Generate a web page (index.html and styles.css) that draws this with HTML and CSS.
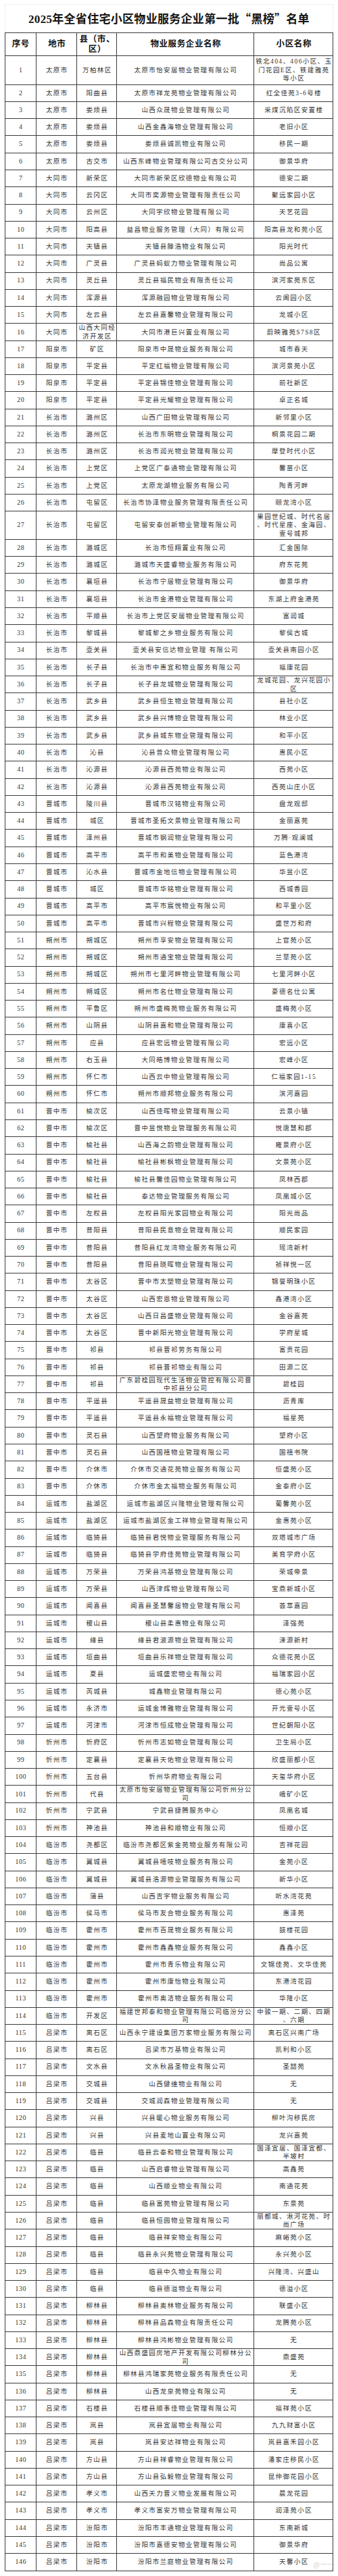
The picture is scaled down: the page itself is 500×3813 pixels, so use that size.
FILE: index.html
```html
<!DOCTYPE html>
<html lang="zh-CN">
<head>
<meta charset="utf-8">
<title>2025年全省住宅小区物业服务企业第一批“黑榜”名单</title>
<link rel="stylesheet" href="styles.css">
</head>
<body>
<div class="page">
  <div class="title-box">
    <h1 class="title">2025年全省住宅小区物业服务企业第一批<span class="q">“</span>黑榜<span class="q">”</span>名单</h1>
  </div>
  <div class="sheet">
    <div class="row head"><span>序号</span><span>地市</span><span><span>县（市、<br>区）</span></span><span>物业服务企业名称</span><span>小区名称</span></div>
    <div class="row tall"><span>1</span><span>太原市</span><span>万柏林区</span><span>太原市怡安居物业管理有限公司</span><span><span>铁北404、406小区、玉<br>门花园E区、铁建雅苑<br>等小区</span></span></div>
    <div class="row"><span>2</span><span>太原市</span><span>阳曲县</span><span>太原市祥龙苑物业管理有限公司</span><span>红全佳苑3-6号楼</span></div>
    <div class="row"><span>3</span><span>太原市</span><span>娄烦县</span><span>山西众晟物业管理有限公司</span><span>采煤沉陷区安置楼</span></div>
    <div class="row"><span>4</span><span>太原市</span><span>娄烦县</span><span>山西金鑫海物业管理有限公司</span><span>老旧小区</span></div>
    <div class="row"><span>5</span><span>太原市</span><span>娄烦县</span><span>娄烦县诚凯物业有限公司</span><span>移民一期</span></div>
    <div class="row"><span>6</span><span>太原市</span><span>古交市</span><span>山西东峰物业管理有限公司古交分公司</span><span>御景华府</span></div>
    <div class="row"><span>7</span><span>大同市</span><span>新荣区</span><span>大同市新荣区欣德物业有限公司</span><span>德安二期</span></div>
    <div class="row"><span>8</span><span>大同市</span><span>云冈区</span><span>大同市奕源物业管理有限责任公司</span><span>聚远家园小区</span></div>
    <div class="row"><span>9</span><span>大同市</span><span>云州区</span><span>大同宇欣物业管理有限公司</span><span>天艺花园</span></div>
    <div class="row"><span>10</span><span>大同市</span><span>阳高县</span><span>益昌物业服务管理（大同）有限公司</span><span>阳高县龙和苑小区</span></div>
    <div class="row"><span>11</span><span>大同市</span><span>天镇县</span><span>天镇县滕浩物业有限公司</span><span>阳光时代</span></div>
    <div class="row"><span>12</span><span>大同市</span><span>广灵县</span><span>广灵县蚂蚁力物业管理有限公司</span><span>尚品公寓</span></div>
    <div class="row"><span>13</span><span>大同市</span><span>灵丘县</span><span>灵丘县福民物业有限责任公司</span><span>滨河家苑东区</span></div>
    <div class="row"><span>14</span><span>大同市</span><span>浑源县</span><span>浑源融园物业管理有限公司</span><span>云阖园小区</span></div>
    <div class="row"><span>15</span><span>大同市</span><span>左云县</span><span>左云县嘉馨物业管理有限公司</span><span>龙城小区</span></div>
    <div class="row"><span>16</span><span>大同市</span><span><span>山西大同经<br>济开发区</span></span><span>大同市港巨兴置业有限公司</span><span>蔚映雅苑S7S8区</span></div>
    <div class="row"><span>17</span><span>阳泉市</span><span>矿区</span><span>阳泉市中晟物业服务有限公司</span><span>城市春天</span></div>
    <div class="row"><span>18</span><span>阳泉市</span><span>平定县</span><span>平定红福物业管理有限公司</span><span>滨河景苑小区</span></div>
    <div class="row"><span>19</span><span>阳泉市</span><span>平定县</span><span>平定县锦佳物业管理有限公司</span><span>前社新区</span></div>
    <div class="row"><span>20</span><span>阳泉市</span><span>平定县</span><span>平定县光耀物业管理有限公司</span><span>卓正名城</span></div>
    <div class="row"><span>21</span><span>长治市</span><span>潞州区</span><span>山西广田物业管理有限公司</span><span>新邻里小区</span></div>
    <div class="row"><span>22</span><span>长治市</span><span>潞州区</span><span>长治市东明物业管理有限公司</span><span>桐景花园二期</span></div>
    <div class="row"><span>23</span><span>长治市</span><span>潞州区</span><span>长治市润光物业管理有限公司</span><span>摩登时代小区</span></div>
    <div class="row"><span>24</span><span>长治市</span><span>上党区</span><span>上党区广泰通物业管理有限公司</span><span>馨苗小区</span></div>
    <div class="row"><span>25</span><span>长治市</span><span>上党区</span><span>太原龙湖物业服务有限公司</span><span>陶青河畔</span></div>
    <div class="row"><span>26</span><span>长治市</span><span>屯留区</span><span>长治市协泽物业服务管理有限责任公司</span><span>颐龙湾小区</span></div>
    <div class="row tall2"><span>27</span><span>长治市</span><span>屯留区</span><span>屯留安泰创新物业管理有限公司</span><span><span>果园世纪城、时代名居<br>、时代星座、金海园、<br>壹号城邦</span></span></div>
    <div class="row"><span>28</span><span>长治市</span><span>潞城区</span><span>长治市恒翔置业有限公司</span><span>汇金国际</span></div>
    <div class="row"><span>29</span><span>长治市</span><span>潞城区</span><span>潞城市天盛睿物业服务有限公司</span><span>府东花苑</span></div>
    <div class="row"><span>30</span><span>长治市</span><span>襄垣县</span><span>长治市宁居物业管理有限公司</span><span>御景华府</span></div>
    <div class="row"><span>31</span><span>长治市</span><span>襄垣县</span><span>长治市金港物业管理有限公司</span><span>东湖上府金港苑</span></div>
    <div class="row"><span>32</span><span>长治市</span><span>平顺县</span><span>长治市上党区安居物业管理有限公司</span><span>富润城</span></div>
    <div class="row"><span>33</span><span>长治市</span><span>黎城县</span><span>黎城黎之乡物业服务有限公司</span><span>黎侯古城</span></div>
    <div class="row"><span>34</span><span>长治市</span><span>壶关县</span><span>壶关县安信达物业管理 有限公司</span><span>壶关县南园小区</span></div>
    <div class="row"><span>35</span><span>长治市</span><span>长子县</span><span>长治市中惠宜和物业服务有限公司</span><span>福康花园</span></div>
    <div class="row"><span>36</span><span>长治市</span><span>长子县</span><span>长子县龙城物业管理有限公司</span><span><span>龙城花园、龙兴花园小<br>区</span></span></div>
    <div class="row"><span>37</span><span>长治市</span><span>武乡县</span><span>武乡县恒生物业管理有限公司</span><span>县社小区</span></div>
    <div class="row"><span>38</span><span>长治市</span><span>武乡县</span><span>武乡县兴博物业管理有限公司</span><span>林业小区</span></div>
    <div class="row"><span>39</span><span>长治市</span><span>武乡县</span><span>武乡县城东物业管理有限公司</span><span>和平小区</span></div>
    <div class="row"><span>40</span><span>长治市</span><span>沁县</span><span>沁县普众物业管理有限公司</span><span>惠民小区</span></div>
    <div class="row"><span>41</span><span>长治市</span><span>沁源县</span><span>沁源县西苑物业有限公司</span><span>西苑小区</span></div>
    <div class="row"><span>42</span><span>长治市</span><span>沁源县</span><span>沁源县西苑物业有限公司</span><span>西苑山庄小区</span></div>
    <div class="row"><span>43</span><span>晋城市</span><span>陵川县</span><span>晋城市汉铭物业有限公司</span><span>盘龙观邸</span></div>
    <div class="row"><span>44</span><span>晋城市</span><span>城区</span><span>晋城市圣拓文景物业管理有限公司</span><span>金丽嘉苑</span></div>
    <div class="row"><span>45</span><span>晋城市</span><span>泽州县</span><span>晋城市钢润物业管理有限公司</span><span>万腾·观澜城</span></div>
    <div class="row"><span>46</span><span>晋城市</span><span>高平市</span><span>高平市和美物业管理有限公司</span><span>蓝色港湾</span></div>
    <div class="row"><span>47</span><span>晋城市</span><span>沁水县</span><span>晋城市金地信物业管理有限公司</span><span>华昱小区</span></div>
    <div class="row"><span>48</span><span>晋城市</span><span>城区</span><span>晋城市华铭物业管理有限公司</span><span>西城香园</span></div>
    <div class="row"><span>49</span><span>晋城市</span><span>高平市</span><span>高平市宸悦物业有限公司</span><span>和平里小区</span></div>
    <div class="row"><span>50</span><span>晋城市</span><span>高平市</span><span>晋城市兴程物业管理有限公司</span><span>盛世万和府</span></div>
    <div class="row"><span>51</span><span>朔州市</span><span>朔城区</span><span>朔州市享安物业管理有限公司</span><span>上官苑小区</span></div>
    <div class="row"><span>52</span><span>朔州市</span><span>朔城区</span><span>朔州市通宝物业管理有限公司</span><span>兰草苑小区</span></div>
    <div class="row"><span>53</span><span>朔州市</span><span>朔城区</span><span>朔州市七里河畔物业管理有限公司</span><span>七里河畔小区</span></div>
    <div class="row"><span>54</span><span>朔州市</span><span>朔城区</span><span>朔州市名仕物业管理有限公司</span><span>豪德名仕公寓</span></div>
    <div class="row"><span>55</span><span>朔州市</span><span>平鲁区</span><span>朔州市盛梅苑物业服务有限公司</span><span>盛梅苑小区</span></div>
    <div class="row"><span>56</span><span>朔州市</span><span>山阴县</span><span>山阴县嘉和物业管理有限公司</span><span>康喜小区</span></div>
    <div class="row"><span>57</span><span>朔州市</span><span>应县</span><span>应县宏远物业管理有限公司</span><span>宏远小区</span></div>
    <div class="row"><span>58</span><span>朔州市</span><span>右玉县</span><span>大同皓博物业管理有限公司</span><span>宏峰小区</span></div>
    <div class="row"><span>59</span><span>朔州市</span><span>怀仁市</span><span>山西云中物业管理有限公司</span><span>仁福家园1-15</span></div>
    <div class="row"><span>60</span><span>朔州市</span><span>怀仁市</span><span>朔州市顺邦物业服务有限公司</span><span>滨河嘉园</span></div>
    <div class="row"><span>61</span><span>晋中市</span><span>榆次区</span><span>山西佳晖物业管理有限公司</span><span>云景小镇</span></div>
    <div class="row"><span>62</span><span>晋中市</span><span>榆次区</span><span>晋中昱悦物业管理服务有限公司</span><span>悦唐慧和郡</span></div>
    <div class="row"><span>63</span><span>晋中市</span><span>榆社县</span><span>山西海之韵物业管理有限公司</span><span>雍景府小区</span></div>
    <div class="row"><span>64</span><span>晋中市</span><span>榆社县</span><span>榆社县彬枫物业管理有限公司</span><span>文景苑小区</span></div>
    <div class="row"><span>65</span><span>晋中市</span><span>榆社县</span><span>榆社县馨佳园物业管理有限公司</span><span>凤林西郡</span></div>
    <div class="row"><span>66</span><span>晋中市</span><span>榆社县</span><span>泰达物业管理服务有限公司</span><span>凤凰城小区</span></div>
    <div class="row"><span>67</span><span>晋中市</span><span>左权县</span><span>左权县阳光家园物业有限公司</span><span>阳光尚品</span></div>
    <div class="row"><span>68</span><span>晋中市</span><span>昔阳县</span><span>昔阳县民意物业管理有限公司</span><span>顺民家园</span></div>
    <div class="row"><span>69</span><span>晋中市</span><span>昔阳县</span><span>昔阳县红龙湾物业服务有限公司</span><span>瑶湾新村</span></div>
    <div class="row"><span>70</span><span>晋中市</span><span>昔阳县</span><span>昔阳县晓晖物业管理有限公司</span><span>祯祥悦一区</span></div>
    <div class="row"><span>71</span><span>晋中市</span><span>太谷区</span><span>晋中市太塑物业管理有限公司</span><span>锦誉明珠小区</span></div>
    <div class="row"><span>72</span><span>晋中市</span><span>太谷区</span><span>山西宏恩物业管理有限公司</span><span>鑫港湾小区</span></div>
    <div class="row"><span>73</span><span>晋中市</span><span>太谷区</span><span>山西日昌盛物业管理有限公司</span><span>金谷嘉苑</span></div>
    <div class="row"><span>74</span><span>晋中市</span><span>太谷区</span><span>晋中新阳光物业管理有限公司</span><span>学府星城</span></div>
    <div class="row"><span>75</span><span>晋中市</span><span>祁县</span><span>祁县晋祁劳务有限公司</span><span>富贵花园</span></div>
    <div class="row"><span>76</span><span>晋中市</span><span>祁县</span><span>祁县晋祁物业有限公司</span><span>田源二区</span></div>
    <div class="row"><span>77</span><span>晋中市</span><span>祁县</span><span><span>广东碧桂园现代生活物业管控有限公司晋<br>中祁县分公司</span></span><span>碧桂园</span></div>
    <div class="row"><span>78</span><span>晋中市</span><span>平遥县</span><span>平遥县晟益物业管理有限公司</span><span>沥青库</span></div>
    <div class="row"><span>79</span><span>晋中市</span><span>平遥县</span><span>平遥县永福物业管理有限公司</span><span>福星苑</span></div>
    <div class="row"><span>80</span><span>晋中市</span><span>灵石县</span><span>山西望府物业服务有限公司</span><span>望府小区</span></div>
    <div class="row"><span>81</span><span>晋中市</span><span>灵石县</span><span>山西国禧物业管理有限公司</span><span>国禧书院</span></div>
    <div class="row"><span>82</span><span>晋中市</span><span>介休市</span><span>介休市交通花苑物业服务有限公司</span><span>恒盛苑小区</span></div>
    <div class="row"><span>83</span><span>晋中市</span><span>介休市</span><span>介休市金太福物业服务有限公司</span><span>金泰府小区</span></div>
    <div class="row"><span>84</span><span>运城市</span><span>盐湖区</span><span>运城市盐湖区兴隆物业管理有限公司</span><span>葡馨苑小区</span></div>
    <div class="row"><span>85</span><span>运城市</span><span>盐湖区</span><span>运城市盐湖区金工祥物业管理有限公司</span><span>金惠苑小区</span></div>
    <div class="row"><span>86</span><span>运城市</span><span>临猗县</span><span>临猗县君悦物业管理服务有限公司</span><span>双塔城市广场</span></div>
    <div class="row"><span>87</span><span>运城市</span><span>临猗县</span><span>临猗县学府佳苑物业管理有限公司</span><span>美育学府小区</span></div>
    <div class="row"><span>88</span><span>运城市</span><span>万荣县</span><span>万荣县鸿基物业管理有限公司</span><span>荣城帝景</span></div>
    <div class="row"><span>89</span><span>运城市</span><span>万荣县</span><span>山西津辉物业管理有限公司</span><span>宝鼎新城小区</span></div>
    <div class="row"><span>90</span><span>运城市</span><span>闻喜县</span><span>闻喜县圣慧馨居物业管理有限公司</span><span>荟萃嘉园</span></div>
    <div class="row"><span>91</span><span>运城市</span><span>稷山县</span><span>稷山县柔惠物业有限公司</span><span>泽强苑</span></div>
    <div class="row"><span>92</span><span>运城市</span><span>绛县</span><span>绛县君波源物业管理有限公司</span><span>涑源新村</span></div>
    <div class="row"><span>93</span><span>运城市</span><span>垣曲县</span><span>垣曲县乐祥物业管理有限公司</span><span>众德花苑小区</span></div>
    <div class="row"><span>94</span><span>运城市</span><span>夏县</span><span>运城盛宏物业有限公司</span><span>福瑞家园小区</span></div>
    <div class="row"><span>95</span><span>运城市</span><span>芮城县</span><span>城鑫物业管理有限公司</span><span>德心苑小区</span></div>
    <div class="row"><span>96</span><span>运城市</span><span>永济市</span><span>运城金博雅物业管理有限公司</span><span>开元壹号小区</span></div>
    <div class="row"><span>97</span><span>运城市</span><span>河津市</span><span>河津市恒成物业管理有限公司</span><span>世纪朝阳小区</span></div>
    <div class="row"><span>98</span><span>忻州市</span><span>忻府区</span><span>忻州市志如物业管理有限公司</span><span>卫生局小区</span></div>
    <div class="row"><span>99</span><span>忻州市</span><span>定襄县</span><span>定襄县天佑物业管理有限公司</span><span>欣盛丽都小区</span></div>
    <div class="row"><span>100</span><span>忻州市</span><span>五台县</span><span>忻州华府物业有限公司</span><span>天玺华府小区</span></div>
    <div class="row"><span>101</span><span>忻州市</span><span>代县</span><span><span>太原市怡安居物业管理有限公司忻州分公<br>司</span></span><span>峨矿小区</span></div>
    <div class="row"><span>102</span><span>忻州市</span><span>宁武县</span><span>宁武县捷腾服务中心</span><span>凤凰名城</span></div>
    <div class="row"><span>103</span><span>忻州市</span><span>神池县</span><span>神池县和顺物业有限公司</span><span>恒顺小区</span></div>
    <div class="row"><span>104</span><span>临汾市</span><span>尧都区</span><span>临汾市尧都区紫金苑物业服务有限公司</span><span>吉祥花园</span></div>
    <div class="row"><span>105</span><span>临汾市</span><span>翼城县</span><span>翼城县嘻吱物业服务有限公司</span><span>金苑小区</span></div>
    <div class="row"><span>106</span><span>临汾市</span><span>翼城县</span><span>翼城县浩源物业管理服务有限公司</span><span>新华小区</span></div>
    <div class="row"><span>107</span><span>临汾市</span><span>蒲县</span><span>山西吉宇物业服务有限公司</span><span>听水湾花苑</span></div>
    <div class="row"><span>108</span><span>临汾市</span><span>侯马市</span><span>侯马市友合物业服务有限公司</span><span>惠泽苑</span></div>
    <div class="row"><span>109</span><span>临汾市</span><span>霍州市</span><span>霍州市百晟物业服务有限公司</span><span>鼓楼花园</span></div>
    <div class="row"><span>110</span><span>临汾市</span><span>霍州市</span><span>霍州市鑫鑫物业服务有限公司</span><span>鑫鑫小区</span></div>
    <div class="row"><span>111</span><span>临汾市</span><span>霍州市</span><span>霍州市青乐物业有限公司</span><span>文锦佳苑、文华佳苑</span></div>
    <div class="row"><span>112</span><span>临汾市</span><span>霍州市</span><span>霍州市康怡物业有限公司</span><span>东港湾花园</span></div>
    <div class="row"><span>113</span><span>临汾市</span><span>霍州市</span><span>霍州市奥洁物业服务有限公司</span><span>华隆小区</span></div>
    <div class="row"><span>114</span><span>临汾市</span><span>开发区</span><span><span>福建世邦泰和物业管理有限公司临汾分公<br>司</span></span><span><span>中骏一期、二期、四期<br>、六期</span></span></div>
    <div class="row"><span>115</span><span>吕梁市</span><span>离石区</span><span>山西永宁建设集团万家物业服务有限公司</span><span>离石区兴南广场</span></div>
    <div class="row"><span>116</span><span>吕梁市</span><span>离石区</span><span>吕梁市万基物业有限公司</span><span>凯利和小区</span></div>
    <div class="row"><span>117</span><span>吕梁市</span><span>文水县</span><span>文水秋昌圣物业有限公司</span><span>圣喆苑</span></div>
    <div class="row"><span>118</span><span>吕梁市</span><span>交城县</span><span>山西健维物业有限公司</span><span>无</span></div>
    <div class="row"><span>119</span><span>吕梁市</span><span>交城县</span><span>交城润森物业管理有限公司</span><span>无</span></div>
    <div class="row"><span>120</span><span>吕梁市</span><span>兴县</span><span>兴县暖心物业服务有限公司</span><span>柳叶沟移民房</span></div>
    <div class="row"><span>121</span><span>吕梁市</span><span>兴县</span><span>兴县麦地山置业有限公司</span><span>龙兴嘉苑</span></div>
    <div class="row"><span>122</span><span>吕梁市</span><span>临县</span><span>临县云泰和物业管理有限公司</span><span><span>国泽宜居、国泽宜都、<br>半坡村</span></span></div>
    <div class="row"><span>123</span><span>吕梁市</span><span>临县</span><span>山西启睿物业管理有限公司</span><span>高鑫苑</span></div>
    <div class="row"><span>124</span><span>吕梁市</span><span>临县</span><span>山西顺业物业有限公司</span><span>南通花苑</span></div>
    <div class="row"><span>125</span><span>吕梁市</span><span>临县</span><span>临县富苑物业管理有限公司</span><span>东景苑</span></div>
    <div class="row"><span>126</span><span>吕梁市</span><span>临县</span><span>临县恒圆物业管理有限公司</span><span><span>丽都城、湫河花苑、时<br>尚广场</span></span></div>
    <div class="row"><span>127</span><span>吕梁市</span><span>临县</span><span>临县祥安物业有限公司</span><span>麻峪苑小区</span></div>
    <div class="row"><span>128</span><span>吕梁市</span><span>临县</span><span>临县永兴苑物业管理有限公司</span><span>永兴苑小区</span></div>
    <div class="row"><span>129</span><span>吕梁市</span><span>临县</span><span>临县中久物业有限公司</span><span>兴隆湾、兴盛山</span></div>
    <div class="row"><span>130</span><span>吕梁市</span><span>临县</span><span>临县德溢物业有限公司</span><span>德溢小区</span></div>
    <div class="row"><span>131</span><span>吕梁市</span><span>柳林县</span><span>柳林县奥林物业服务有限公司</span><span>联盛小区</span></div>
    <div class="row"><span>132</span><span>吕梁市</span><span>柳林县</span><span>柳林县品森物业有限责任公司</span><span>龙腾苑小区</span></div>
    <div class="row"><span>133</span><span>吕梁市</span><span>柳林县</span><span>柳林县鸿彬物业管理有限公司</span><span>无</span></div>
    <div class="row"><span>134</span><span>吕梁市</span><span>柳林县</span><span><span>山西鼎盛园房地产开发有限公司柳林分公<br>司</span></span><span>鼎盛苑</span></div>
    <div class="row"><span>135</span><span>吕梁市</span><span>柳林县</span><span>柳林县鸿瑞家苑物业服务有限责任公司</span><span>无</span></div>
    <div class="row"><span>136</span><span>吕梁市</span><span>柳林县</span><span>山西龙泉苑物业有限公司</span><span>无</span></div>
    <div class="row"><span>137</span><span>吕梁市</span><span>石楼县</span><span>石楼县顺事佳物业管理有限公司</span><span>福祥苑小区</span></div>
    <div class="row"><span>138</span><span>吕梁市</span><span>岚县</span><span>岚县宜居物业有限公司</span><span>九九财富小区</span></div>
    <div class="row"><span>139</span><span>吕梁市</span><span>岚县</span><span>岚县安达祥物业有限公司</span><span>岚县嘉禾园小区</span></div>
    <div class="row"><span>140</span><span>吕梁市</span><span>方山县</span><span>方山县祥睿物业管理有限公司</span><span>潘家庄移民小区</span></div>
    <div class="row"><span>141</span><span>吕梁市</span><span>方山县</span><span>方山县弘毅物业管理有限公司</span><span>昆仲御花园小区</span></div>
    <div class="row"><span>142</span><span>吕梁市</span><span>孝义市</span><span>山西天力晋义物业发展有限公司</span><span>晨龙花园</span></div>
    <div class="row"><span>143</span><span>吕梁市</span><span>孝义市</span><span>孝义市富安万物业管理有限公司</span><span>润泽苑小区</span></div>
    <div class="row"><span>144</span><span>吕梁市</span><span>汾阳市</span><span>汾阳市丰通物业管理有限公司</span><span>东南新城</span></div>
    <div class="row"><span>145</span><span>吕梁市</span><span>汾阳市</span><span>汾阳市嘉德安物业管理有限公司</span><span>御景华府</span></div>
    <div class="row"><span>146</span><span>吕梁市</span><span>汾阳市</span><span>汾阳市兰庭物业管理有限公司</span><span>天馨小区</span></div>
  </div>
  <div class="watermark">@一一</div>
</div>
</body>
</html>
```

FILE: styles.css
```css
* {
  box-sizing: border-box;
}

html,
body {
  margin: 0;
  padding: 0;
  background: #ffffff;
}

body {
  font-family: "Liberation Serif", "Noto Sans CJK SC", serif;
  color: #333333;
}

.page {
  position: relative;
  width: 500px;
  height: 3813px;
  padding: 6px 0 0 6.7px;
}

.title-box {
  width: 486.6px;
  height: 42.33px;
  border: 1px solid #f0f0f0;
  border-bottom: none;
  display: flex;
  align-items: center;
  justify-content: center;
}

.title {
  margin: 0;
  font-size: 17px;
  font-weight: 700;
  color: #141414;
  letter-spacing: 0.3px;
  white-space: nowrap;
  line-height: 1;
}

.q {
  font-family: "Noto Sans CJK SC", sans-serif;
}

.sheet {
  width: 486.6px;
  border-top: 1px solid #3c3c3c;
  border-left: 1px solid #3c3c3c;
}

.row {
  display: grid;
  grid-template-columns: 46.6px 59.7px 59.3px 202.7px 1fr;
  height: 25.27px;
  border-bottom: 1px solid #3c3c3c;
}

.row > span {
  display: flex;
  align-items: center;
  justify-content: center;
  text-align: center;
  border-right: 1px solid #3c3c3c;
  font-size: 9.5px;
  letter-spacing: 1.4px;
  padding-left: 1.4px;
  line-height: 12.5px;
  white-space: nowrap;
  color: #333333;
}

.row > span:first-child {
  font-size: 10px;
  letter-spacing: 0.5px;
  padding-left: 0.5px;
}

.head {
  height: 33.67px;
}

.head > span,
.head > span:first-child {
  font-size: 12.5px;
  font-weight: 700;
  color: #111111;
  letter-spacing: 0.6px;
  line-height: 15px;
}

.tall {
  height: 42.67px;
}

.tall2 {
  height: 41.67px;
}

.watermark {
  position: absolute;
  right: 4px;
  top: 3788px;
  font-family: "Noto Sans CJK SC", sans-serif;
  font-size: 10px;
  color: rgba(160, 160, 160, 0.55);
  letter-spacing: 1px;
}
```
